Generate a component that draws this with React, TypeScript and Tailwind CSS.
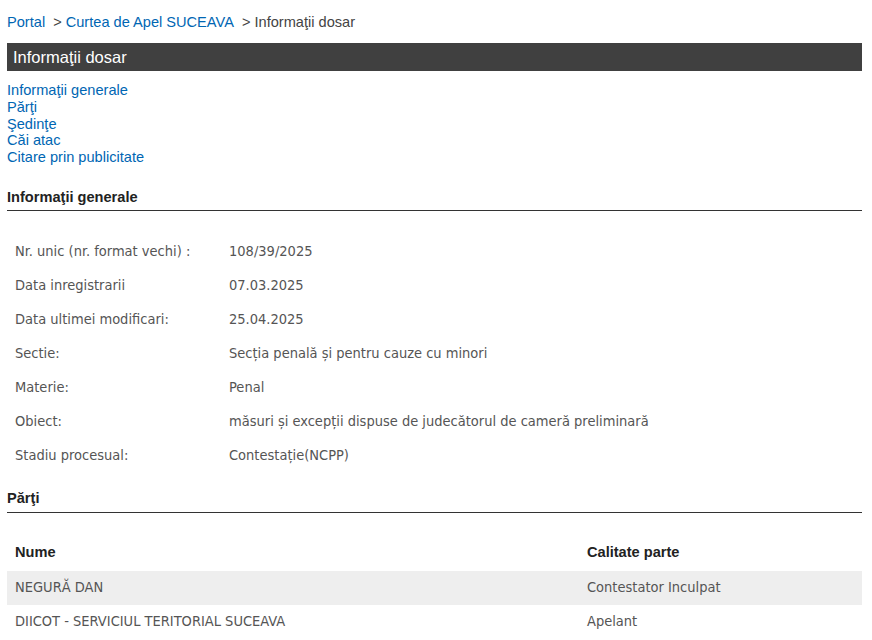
const info: [string, string][] = [
  ['Nr. unic (nr. format vechi) :', '108/39/2025'],
  ['Data inregistrarii', '07.03.2025'],
  ['Data ultimei modificari:', '25.04.2025'],
  ['Sectie:', 'Secția penală și pentru cauze cu minori'],
  ['Materie:', 'Penal'],
  ['Obiect:', 'măsuri și excepții dispuse de judecătorul de cameră preliminară'],
  ['Stadiu procesual:', 'Contestație(NCPP)'],
]

const parti: [string, string][] = [
  ['NEGURĂ DAN', 'Contestator Inculpat'],
  ['DIICOT - SERVICIUL TERITORIAL SUCEAVA', 'Apelant'],
]

const links = ['Informaţii generale', 'Părţi', 'Şedinţe', 'Căi atac', 'Citare prin publicitate']

const tahoma = "font-['DejaVu_Sans_Condensed','DejaVu_Sans',sans-serif] text-[14.5px]"

export default function App() {
  return <div className="w-[872px] h-[640px] overflow-hidden bg-white font-['Liberation_Sans',Arial,sans-serif] text-[14.6px]">
    <div className="pl-[7px] pr-[10px]">
      <div className="pt-[14px] h-[43px] leading-[17px] text-[#444]">
        <a className="text-[#0066b3]" href="#">Portal</a>
        <span className="ml-[8px]">&gt; </span>
        <a className="text-[#0066b3]" href="#">Curtea de Apel SUCEAVA</a>
        <span className="ml-[8px]">&gt; Informaţii dosar</span>
      </div>
      <div className="h-[28px] bg-[#404040] text-white text-[16.5px] leading-[28px] pl-[6px]">
        Informaţii dosar
      </div>
      <ul className="mt-[11px] leading-[16.75px]">
        {links.map(l => <li key={l}>
          <a className="text-[#0066b3]" href="#">{l}</a>
        </li>)}
      </ul>

      <h2 className="mt-[23px] font-bold text-[#222] leading-[17px] pb-[4px] border-b border-[#333]">
        Informaţii generale
      </h2>
      <table className={`mt-[24px] ${tahoma} text-[#555] w-full`}>
        <tbody>
          {info.map(([k, v]) => <tr key={k} className="h-[34px]">
            <td className="pl-[8px] w-[222px]">{k}</td>
            <td>{v}</td>
          </tr>)}
        </tbody>
      </table>

      <h2 className="mt-[17px] font-bold text-[#222] leading-[17px] pb-[5px] border-b border-[#333]">
        Părţi
      </h2>
      <table className="mt-[20px] w-full">
        <thead>
          <tr className="h-[38px] text-left text-[#222]">
            <th className="pl-[8px] pt-[3px] font-bold">Nume</th>
            <th className="pl-[2px] pt-[3px] w-[277px] font-bold">Calitate parte</th>
          </tr>
        </thead>
        <tbody className={`${tahoma} text-[#555]`}>
          {parti.map(([n, c], i) => <tr key={n} className={i % 2 === 0 ? 'h-[34px] bg-[#eeeeee]' : 'h-[34px]'}>
            <td className="pl-[8px]">{n}</td>
            <td className="pl-[2px]">{c}</td>
          </tr>)}
        </tbody>
      </table>
    </div>
  </div>
}
